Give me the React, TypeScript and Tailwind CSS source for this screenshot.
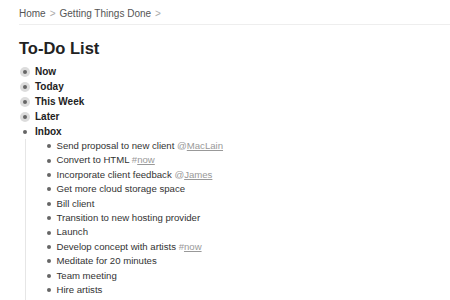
import React from 'react';

type Part = { text: string; tag?: string; prefix?: string };

const inbox: Part[][] = [
  [{ text: 'Send proposal to new client ' }, { text: '', prefix: '@', tag: 'MacLain' }],
  [{ text: 'Convert to HTML ' }, { text: '', prefix: '#', tag: 'now' }],
  [{ text: 'Incorporate client feedback ' }, { text: '', prefix: '@', tag: 'James' }],
  [{ text: 'Get more cloud storage space' }],
  [{ text: 'Bill client' }],
  [{ text: 'Transition to new hosting provider' }],
  [{ text: 'Launch' }],
  [{ text: 'Develop concept with artists ' }, { text: '', prefix: '#', tag: 'now' }],
  [{ text: 'Meditate for 20 minutes' }],
  [{ text: 'Team meeting' }],
  [{ text: 'Hire artists' }],
  [{ text: 'Book Work for team ' }, { text: '', prefix: '@', tag: 'MacLain' }],
];

const top = ['Now', 'Today', 'This Week', 'Later'];

const Bullet = ({ collapsed }: { collapsed?: boolean }) => (
  <span className="flex h-[15px] w-[16px] shrink-0 items-center justify-center">
    <span
      className={`flex h-[10px] w-[10px] items-center justify-center rounded-full ${
        collapsed ? 'bg-[#dcdcdc]' : ''
      }`}
    >
      <span className="h-[4px] w-[4px] rounded-full bg-[#666]" />
    </span>
  </span>
);

export default function App() {
  return (
    <div className="h-[300px] w-[450px] overflow-hidden bg-white font-['Liberation_Sans',Arial,sans-serif] text-[#333]">
      <div className="ml-[19px] flex h-[25px] items-center gap-[4px] border-b border-[#eeeeee] pt-[3px] text-[10px] text-[#555]">
        <span>Home</span>
        <span className="text-[#aaa]">&gt;</span>
        <span>Getting Things Done</span>
        <span className="text-[#aaa]">&gt;</span>
      </div>

      <h1 className="ml-[19px] mt-[11px] text-[16.5px] font-bold leading-[24px] text-[#222]">To-Do List</h1>

      <ul className="ml-[17px] mt-[4px]">
        {top.map((t) => (
          <li key={t} className="flex h-[15px] items-center gap-[2px] text-[10px] font-bold leading-[15px] text-[#222]">
            <Bullet collapsed />
            <span>{t}</span>
          </li>
        ))}
        <li>
          <div className="flex h-[15px] items-center gap-[2px] text-[10px] font-bold leading-[15px] text-[#222]">
            <Bullet />
            <span>Inbox</span>
          </div>
          <ul className="ml-[7.5px] border-l border-[#e6e6e6] pl-[15px]">
            {inbox.map((parts, i) => (
              <li key={i} className="flex h-[14.4px] items-center text-[9.6px] leading-[14.4px]">
                <Bullet />
                <span className="whitespace-nowrap">
                  {parts.map((p, j) =>
                    p.tag ? (
                      <span key={j} className="text-[#999]">
                        {p.prefix}
                        <span className="underline">{p.tag}</span>
                      </span>
                    ) : (
                      <span key={j}>{p.text}</span>
                    )
                  )}
                </span>
              </li>
            ))}
          </ul>
        </li>
      </ul>
    </div>
  );
}
